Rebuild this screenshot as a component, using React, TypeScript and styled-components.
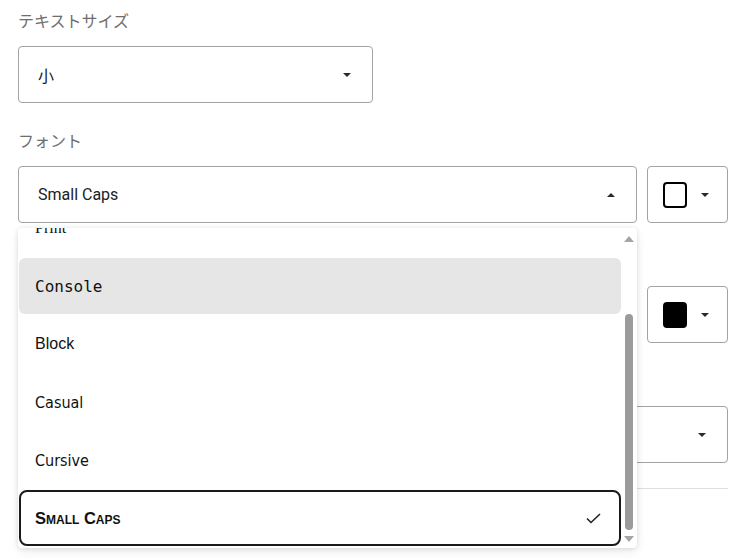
import { useLayoutEffect, useRef } from "react";
import styled, { createGlobalStyle } from "styled-components";

const GlobalStyle = createGlobalStyle`
  html, body, #root {
    height: 100%;
  }
  body {
    margin: 0;
    overflow: hidden;
    background: #ffffff;
    font-family: Roboto, "Noto Sans CJK JP", sans-serif;
    color: #202124;
  }
`;

const Page = styled.div`
  box-sizing: border-box;
  min-height: 100%;
  padding: 8px 12px 0 18px;
  display: flex;
  flex-direction: column;
  gap: 25px;
`;

const Section = styled.section`
  display: flex;
  flex-direction: column;
  gap: 14px;
`;

const Label = styled.div`
  height: 24px;
  line-height: 24px;
  font-size: 16px;
  color: #6e6e6e;
  font-family: "Noto Sans CJK JP", Roboto, sans-serif;
`;

const Row = styled.div`
  display: flex;
  gap: 10px;
`;

const SelectWrap = styled.div<{ $width?: number }>`
  position: relative;
  ${(p) => (p.$width ? `width: ${p.$width}px;` : "flex: 1;")}
`;

const SelectBox = styled.div`
  box-sizing: border-box;
  height: 57px;
  border: 1px solid #a3a3a3;
  border-radius: 4px;
  display: flex;
  align-items: center;
  justify-content: space-between;
  padding: 0 21px 0 19px;
  font-size: 16px;
  background: #fff;
`;

const Caret = styled.span<{ $up?: boolean }>`
  width: 0;
  height: 0;
  border-left: 4px solid transparent;
  border-right: 4px solid transparent;
  ${(p) =>
    p.$up
      ? "border-bottom: 4px solid #2a2a2a;"
      : "border-top: 4px solid #2a2a2a;"}
`;

const ColorButton = styled.div`
  box-sizing: border-box;
  width: 81px;
  height: 57px;
  border: 1px solid #a3a3a3;
  border-radius: 4px;
  display: flex;
  align-items: center;
  padding: 0 0 0 15px;
  gap: 14px;
`;

const Swatch = styled.span<{ $color: string }>`
  box-sizing: border-box;
  width: 24px;
  height: 26px;
  border-radius: 4px;
  border: 2px solid #000;
  background: ${(p) => p.$color};
`;

const Divider = styled.hr`
  margin: 0;
  border: none;
  border-top: 1px solid #dedede;
`;

const ListBox = styled.div`
  position: absolute;
  top: calc(100% + 5px);
  left: 0;
  right: 0;
  height: 320px;
  box-sizing: border-box;
  background: #fff;
  border-radius: 4px;
  box-shadow: 0 1px 5px rgba(0, 0, 0, 0.12), 0 4px 12px rgba(0, 0, 0, 0.06);
  display: flex;
  padding-left: 1px;
  z-index: 10;
`;

const Options = styled.div`
  flex: 1;
  overflow: hidden;
  display: flex;
  flex-direction: column;
  gap: 2px;
  padding: 8px 0 2px;
`;

const Option = styled.div<{ $font: string; $active?: boolean; $selected?: boolean }>`
  flex: none;
  box-sizing: border-box;
  height: 56px;
  display: flex;
  align-items: center;
  justify-content: space-between;
  padding: 0 18px 0 16px;
  font-size: 16px;
  color: #111;
  font-family: ${(p) => p.$font};
  border-radius: ${(p) => (p.$selected ? "8px" : "6px")};
  background: ${(p) => (p.$active ? "#e6e6e6" : "transparent")};
  border: ${(p) => (p.$selected ? "2px solid #1a1a1a" : "none")};
  padding-left: ${(p) => (p.$selected ? "14px" : "16px")};
`;

const SmallCaps = styled.span`
  font-variant: small-caps;
  font-weight: bold;
  font-size: 16.5px;
`;

const ScrollTrack = styled.div`
  width: 16px;
  flex: none;
  display: flex;
  flex-direction: column;
  align-items: center;
  padding: 8px 0 6px;
`;

const Arrow = styled.span<{ $down?: boolean }>`
  width: 0;
  height: 0;
  border-left: 5px solid transparent;
  border-right: 5px solid transparent;
  ${(p) =>
    p.$down
      ? "border-top: 6px solid #a6a6a6;"
      : "border-bottom: 6px solid #a6a6a6;"}
`;

const ThumbArea = styled.div`
  flex: 1;
  display: flex;
  flex-direction: column;
  justify-content: flex-end;
  padding: 0 0 6px;
`;

const Thumb = styled.div`
  width: 8px;
  height: 216px;
  border-radius: 4px;
  background: #9b9b9b;
`;

const fonts = [
  { name: "Typewriter", font: `"Liberation Mono", monospace` },
  { name: "Print", font: `"Liberation Serif", serif` },
  { name: "Console", font: `"DejaVu Sans Mono", monospace` },
  { name: "Block", font: `"Liberation Sans", Arial, sans-serif` },
  { name: "Casual", font: `"Comic Sans MS", "DejaVu Sans Condensed", cursive` },
  { name: "Cursive", font: `"Comic Sans MS", "DejaVu Sans Condensed", cursive` },
  { name: "Small Caps", font: `"Liberation Sans", Arial, sans-serif` },
];

function Check() {
  return (
    <svg width="15" height="11" viewBox="0 0 15 11">
      <polyline
        points="1,5.5 5,9.5 14,1"
        fill="none"
        stroke="#222"
        strokeWidth="1.6"
      />
    </svg>
  );
}

function FontMenu() {
  const ref = useRef<HTMLDivElement>(null);
  useLayoutEffect(() => {
    if (ref.current) ref.current.scrollTop = ref.current.scrollHeight;
  }, []);

  return (
    <ListBox>
      <Options ref={ref}>
        {fonts.map((f) => (
          <Option
            key={f.name}
            $font={f.font}
            $active={f.name === "Console"}
            $selected={f.name === "Small Caps"}
          >
            {f.name === "Small Caps" ? <SmallCaps>{f.name}</SmallCaps> : f.name}
            {f.name === "Small Caps" && <Check />}
          </Option>
        ))}
      </Options>
      <ScrollTrack>
        <Arrow />
        <ThumbArea>
          <Thumb />
        </ThumbArea>
        <Arrow $down />
      </ScrollTrack>
    </ListBox>
  );
}

export default function App() {
  return (
    <>
      <GlobalStyle />
      <Page>
        <Section>
          <Label>テキストサイズ</Label>
          <SelectWrap $width={355}>
            <SelectBox>
              <span>小</span>
              <Caret />
            </SelectBox>
          </SelectWrap>
        </Section>

        <Section>
          <Label>フォント</Label>
          <Row>
            <SelectWrap>
              <SelectBox>
                <span>Small Caps</span>
                <Caret $up />
              </SelectBox>
              <FontMenu />
            </SelectWrap>
            <ColorButton>
              <Swatch $color="#ffffff" />
              <Caret />
            </ColorButton>
          </Row>
        </Section>

        <Section>
          <Label>背景</Label>
          <Row>
            <SelectWrap>
              <SelectBox>
                <span>不透明</span>
                <Caret />
              </SelectBox>
            </SelectWrap>
            <ColorButton>
              <Swatch $color="#000000" />
              <Caret />
            </ColorButton>
          </Row>
        </Section>

        <Section>
          <Label>テキストの影</Label>
          <SelectWrap>
            <SelectBox>
              <span>なし</span>
              <Caret />
            </SelectBox>
          </SelectWrap>
        </Section>

        <Divider />
      </Page>
    </>
  );
}
